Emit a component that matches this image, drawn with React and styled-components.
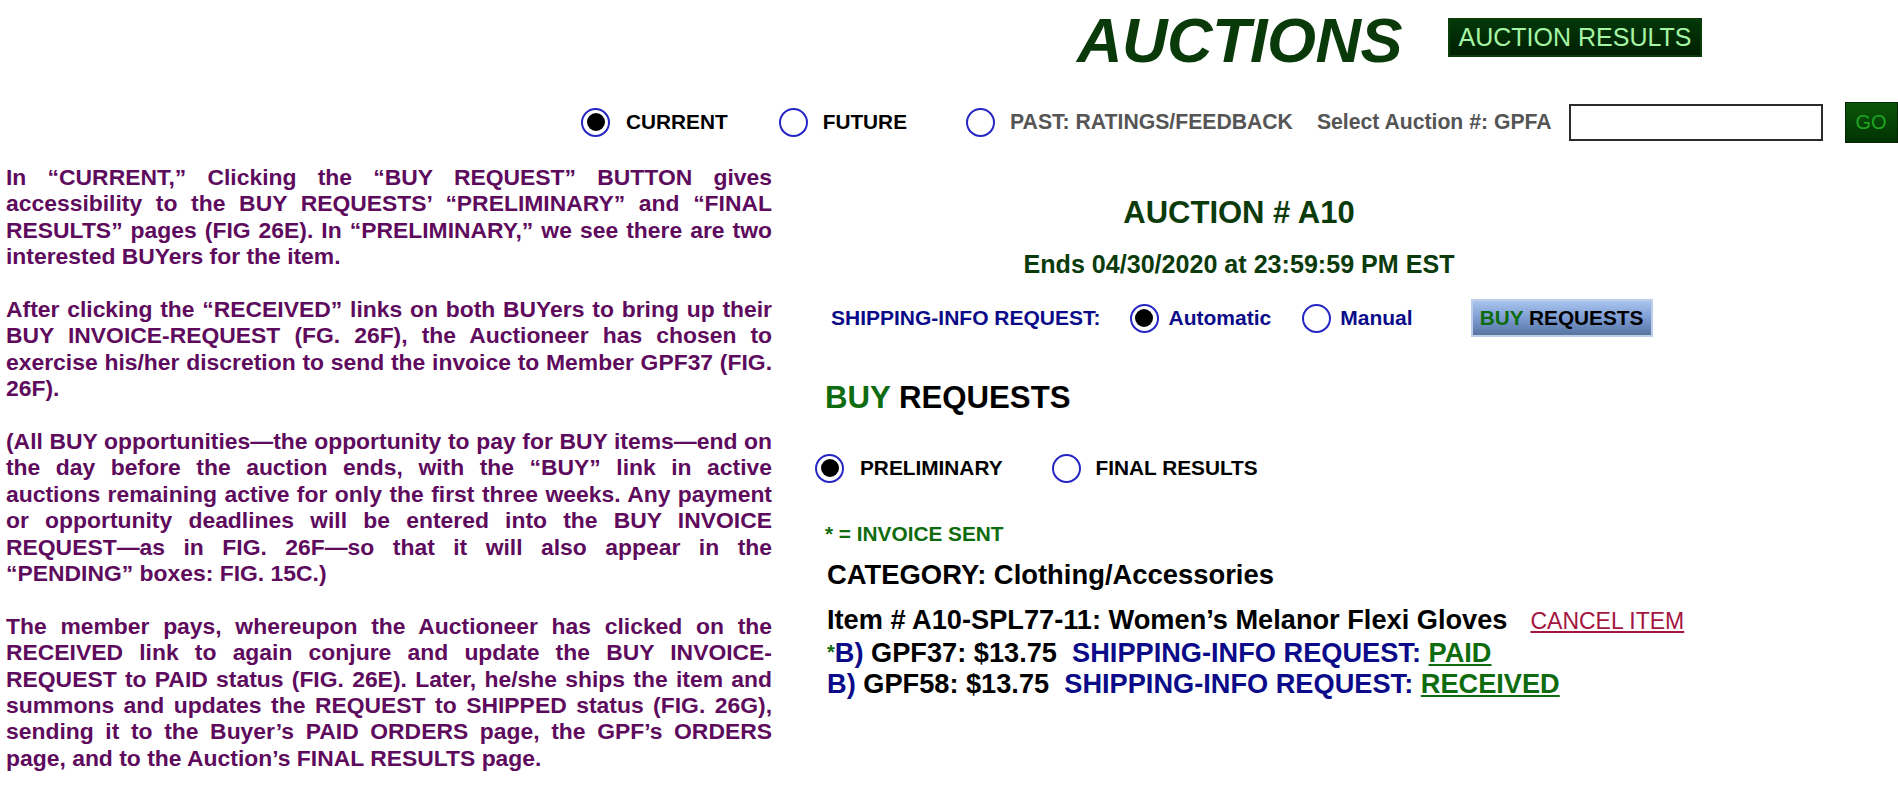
import React from 'react'
import styled, { createGlobalStyle } from 'styled-components'

const GlobalStyle = createGlobalStyle`
    html, body {
        margin: 0;
        padding: 0;
        background: #fff;
        overflow-x: hidden;
    }
    body {
        font-family: "Liberation Sans", Arial, sans-serif;
        font-weight: bold;
    }
`;

const paragraphs = [
    [
        'In “CURRENT,” Clicking the “BUY REQUEST” BUTTON gives',
        'accessibility to the BUY REQUESTS’ “PRELIMINARY” and “FINAL',
        'RESULTS” pages (FIG 26E). In “PRELIMINARY,” we see  there are two',
        'interested BUYers for the item.',
    ],
    [
        'After clicking the “RECEIVED” links on both BUYers to bring up their',
        'BUY INVOICE-REQUEST (FG. 26F), the Auctioneer has chosen to',
        'exercise his/her discretion to send the invoice to Member GPF37 (FIG.',
        '26F).',
    ],
    [
        '(All BUY opportunities—the opportunity to pay for BUY items—end on',
        'the day before the auction ends, with the “BUY” link in active',
        'auctions remaining active for only the first three weeks. Any payment',
        'or opportunity deadlines will be entered into the BUY INVOICE',
        'REQUEST—as in FIG. 26F—so that it will also appear in the',
        '“PENDING” boxes: FIG. 15C.)',
    ],
    [
        'The member pays, whereupon the Auctioneer has clicked on the',
        'RECEIVED link to again conjure and update the BUY INVOICE-',
        'REQUEST to PAID status (FIG. 26E). Later, he/she ships the item and',
        'summons and updates the REQUEST to SHIPPED status (FIG. 26G),',
        'sending it to the Buyer’s PAID ORDERS page, the GPF’s ORDERS',
        'page, and to the Auction’s FINAL RESULTS page.',
    ],
];

const bids = [
    { invoiced: true, id: 'GPF37', amount: '$13.75', status: 'PAID' },
    { invoiced: false, id: 'GPF58', amount: '$13.75', status: 'RECEIVED' },
];

function App() {
    return (
        <Page>
            <GlobalStyle />
            <TopBar>
                <Title>AUCTIONS</Title>
                <ResultsButton>AUCTION RESULTS</ResultsButton>
            </TopBar>

            <FilterRow>
                <Radio $checked />
                <OptionText $gap={16}>CURRENT</OptionText>
                <Radio $gap={51} />
                <OptionText $gap={15}>FUTURE</OptionText>
                <Radio $gap={59} />
                <OptionText $gap={15} $size={21.2} $color="#555">PAST: RATINGS/FEEDBACK</OptionText>
                <OptionText $gap={24} $size={21.2} $color="#555">Select Auction #: GPFA</OptionText>
                <AuctionInput type="text" />
                <GoButton>GO</GoButton>
            </FilterRow>

            <Main>
                <Explanation>
                    {paragraphs.map((lines, i) => (
                        <Paragraph key={i}>
                            {lines.map((line, j) => (
                                <Line key={j} $last={j === lines.length - 1}>{line}</Line>
                            ))}
                        </Paragraph>
                    ))}
                </Explanation>

                <Details>
                    <AuctionTitle>AUCTION # A10</AuctionTitle>
                    <Ends>Ends 04/30/2020 at 23:59:59 PM EST</Ends>

                    <ShippingRow>
                        <OptionText $size={21} $color="#0b0b8a">SHIPPING-INFO REQUEST:</OptionText>
                        <Radio $gap={29} $checked />
                        <OptionText $gap={10} $size={21} $color="#0b0b8a">Automatic</OptionText>
                        <Radio $gap={31} />
                        <OptionText $gap={9} $size={21} $color="#0b0b8a">Manual</OptionText>
                        <BuyButton>
                            <Green>BUY</Green> REQUESTS
                        </BuyButton>
                    </ShippingRow>

                    <SectionHeading>
                        <Green>BUY</Green> REQUESTS
                    </SectionHeading>

                    <StageRow>
                        <Radio $checked />
                        <OptionText $gap={16}>PRELIMINARY</OptionText>
                        <Radio $gap={49} />
                        <OptionText $gap={15}>FINAL RESULTS</OptionText>
                    </StageRow>

                    <InvoiceNote>* = INVOICE SENT</InvoiceNote>

                    <Category>CATEGORY: Clothing/Accessories</Category>

                    <ItemBlock>
                        <ItemLine>
                            Item # A10-SPL77-11: Women’s Melanor Flexi Gloves
                            <CancelLink href="#">CANCEL ITEM</CancelLink>
                        </ItemLine>
                        {bids.map(bid => (
                            <ItemLine key={bid.id}>
                                {bid.invoiced && <Star>*</Star>}
                                <Navy>B)</Navy>{` ${bid.id}: ${bid.amount}  `}
                                <Navy>SHIPPING-INFO REQUEST:</Navy>{' '}
                                <StatusLink href="#">{bid.status}</StatusLink>
                            </ItemLine>
                        ))}
                    </ItemBlock>
                </Details>
            </Main>
        </Page>
    )
}

export default App

const Page = styled.div`
    width: 1898px;
    min-height: 787px;
`;

const TopBar = styled.div`
    display: flex;
    align-items: flex-start;
    height: 80px;
    padding-left: 1077px;
`;

const Title = styled.h1`
    margin: 8px 0 0;
    font-size: 63px;
    line-height: 64px;
    font-style: italic;
    font-weight: bold;
    color: #0a3a0a;
    letter-spacing: -0.5px;
`;

const ResultsButton = styled.button`
    margin: 18px 0 0 46px;
    width: 254px;
    height: 39px;
    padding: 0;
    border: 2px solid #0b3d0b;
    background: linear-gradient(#03380a, #001f00);
    color: #a6f5a6;
    font-family: inherit;
    font-size: 25px;
    font-weight: normal;
    line-height: 35px;
`;

const FilterRow = styled.div`
    display: flex;
    align-items: center;
    height: 84px;
    padding-left: 581px;
`;

const Radio = styled.span`
    box-sizing: border-box;
    flex-shrink: 0;
    width: 29px;
    height: 29px;
    margin-left: ${props => props.$gap || 0}px;
    border: 2px solid #2626c4;
    border-radius: 50%;
    background: #fff;
    display: inline-flex;
    align-items: center;
    justify-content: center;

    &::after {
        content: '';
        width: 18px;
        height: 18px;
        border-radius: 50%;
        background: ${props => props.$checked ? '#000' : 'transparent'};
    }
`;

const OptionText = styled.span`
    margin-left: ${props => props.$gap || 0}px;
    font-size: ${props => props.$size || 20.8}px;
    font-weight: bold;
    color: ${props => props.$color || '#000'};
    white-space: nowrap;
`;

const AuctionInput = styled.input`
    box-sizing: border-box;
    margin-left: 17px;
    width: 254px;
    height: 37px;
    border: 2px solid #2b2b2b;
    background: #fff;
    outline: none;
`;

const GoButton = styled.button`
    margin-left: 22px;
    width: 53px;
    height: 41px;
    padding: 0;
    border: 1px solid #012601;
    background: linear-gradient(#0b560b, #013201);
    color: #1fa51f;
    font-family: inherit;
    font-size: 20px;
    font-weight: normal;
`;

const Main = styled.div`
    display: grid;
    grid-template-columns: 815px 848px;
    align-items: start;
`;

const Explanation = styled.div`
    padding-left: 6px;
    width: 766px;
    color: #5e0b5e;
    font-size: 22.9px;
    line-height: 26.4px;
`;

const Paragraph = styled.p`
    margin: 0 0 26.4px;
`;

const Line = styled.span`
    display: block;
    text-align: justify;
    text-align-last: ${props => props.$last ? 'left' : 'justify'};
`;

const Details = styled.div`
    display: flex;
    flex-direction: column;
`;

const AuctionTitle = styled.h2`
    margin: 31px 0 0;
    text-align: center;
    font-size: 31px;
    line-height: 36px;
    color: #0b3b0b;
`;

const Ends = styled.div`
    margin-top: 18px;
    text-align: center;
    font-size: 25.1px;
    line-height: 30px;
    color: #0b3b0b;
`;

const ShippingRow = styled.div`
    display: flex;
    align-items: center;
    height: 40px;
    margin-top: 19px;
    padding-left: 16px;
`;

const BuyButton = styled.button`
    margin-left: 58px;
    width: 182px;
    height: 38px;
    padding: 0;
    border: 2px solid #bccde9;
    background: linear-gradient(#a9c4ee, #7998cf 55%, #57749f);
    color: #000;
    font-family: inherit;
    font-size: 20.8px;
    font-weight: bold;
`;

const Green = styled.span`
    color: #0e6b0e;
`;

const Navy = styled.span`
    color: #0b0b8a;
`;

const SectionHeading = styled.h3`
    margin: 42px 0 0;
    padding-left: 10px;
    font-size: 31.2px;
    line-height: 36px;
    color: #000;
`;

const StageRow = styled.div`
    display: flex;
    align-items: center;
    height: 32px;
    margin-top: 36px;
`;

const InvoiceNote = styled.div`
    margin-top: 37px;
    padding-left: 10px;
    font-size: 20.8px;
    line-height: 26px;
    color: #0e6b0e;
`;

const Category = styled.div`
    margin-top: 12px;
    padding-left: 12px;
    font-size: 27.4px;
    line-height: 32px;
    color: #000;
`;

const ItemBlock = styled.div`
    margin-top: 13px;
    padding-left: 12px;
`;

const ItemLine = styled.div`
    font-size: 27.2px;
    line-height: 31px;
    color: #000;
    white-space: pre;
`;

const CancelLink = styled.a`
    margin-left: 23px;
    font-size: 23px;
    font-weight: normal;
    color: #a3163e;
    text-decoration: underline;
`;

const Star = styled.span`
    font-size: 20px;
    color: #0e6b0e;
    vertical-align: 3px;
`;

const StatusLink = styled.a`
    color: #0e6b0e;
    text-decoration: underline;
`;
